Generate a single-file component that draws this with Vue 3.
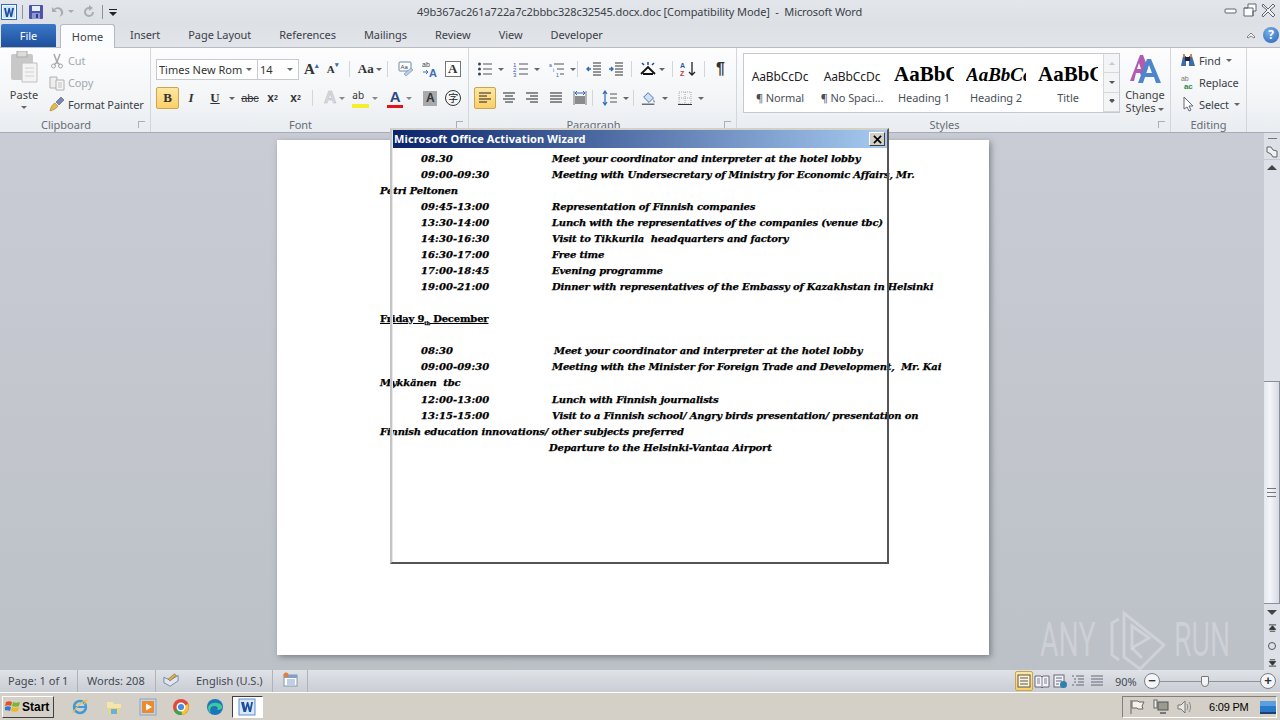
<template>
  <div class="window">
    <header class="titlebar">
      <div class="qat">
        <svg class="ic wordlogo" viewBox="0 0 16 16"><rect x=".5" y=".5" width="15" height="15" fill="#fff" stroke="#2a6cb8"/><rect x="2" y="2" width="12" height="12" fill="#cfe3f7"/><path d="M3 4h2l1 6 1.5-6h1.4L10 10l1-6h2l-2 9H9.400L8.200 8 7 13H5z" fill="#1c4f9c"/></svg>
        <span class="qsep"></span>
        <svg class="ic" viewBox="0 0 16 16"><rect x="1" y="1" width="14" height="14" rx="1" fill="#4a55a8"/><rect x="4" y="2" width="8" height="5" fill="#e8eefc"/><rect x="4" y="9" width="8" height="6" fill="#8d96d0"/><rect x="8" y="10" width="2" height="4" fill="#333c80"/></svg>
        <svg class="ic" viewBox="0 0 16 16"><path d="M3 3v5h5L6 6c2-2 6-1 6 3 0 2-1 3-2 4 3-1 5-3 4-6-1-4-6-5-9-2z" fill="#a9adb3"/></svg>
        <span class="tiny-caret q-caret"></span>
        <svg class="ic" viewBox="0 0 16 16"><path d="M8 3a5 5 0 1 0 5 5h-2a3 3 0 1 1-3-3v2l4-3-4-3z" fill="#a9adb3"/></svg>
        <span class="qsep"></span>
        <svg class="ic small-ic" viewBox="0 0 10 10"><path d="M1 2h8v1H1zM1 5h8L5 9z" fill="#222"/></svg>
      </div>
      <div class="doc-title">49b367ac261a722a7c2bbbc328c32545.docx.doc [Compatibility Mode]&nbsp; -&nbsp; Microsoft Word</div>
      <div class="winbtns">
        <svg class="ic" viewBox="0 0 16 16"><rect x="2" y="7" width="11" height="4" rx="1" fill="#fff" stroke="#5f6670"/></svg>
        <svg class="ic" viewBox="0 0 16 16"><path d="M6 2h8v7h-3v5H2V6h4z" fill="#fff" stroke="#5f6670"/><path d="M2 6h9v8" fill="none" stroke="#5f6670"/></svg>
        <svg class="ic" viewBox="0 0 16 16"><path d="M2 2l5 5 5-5 2 2-5 4 5 5-2 2-5-5-5 5-1-2 5-5-5-4z" fill="#eef0f3" stroke="#5f6670"/></svg>
      </div>
    </header>

    <nav class="tabs">
      <div class="tab-file">File</div>
      <div class="tab-home">Home</div>
      <div v-for="t in tabs" :key="t" class="tab">{{ t }}</div>
      <div class="tab-right">
        <svg class="ic small-ic" viewBox="0 0 10 10"><path d="M1 7l4-4 4 4-1 1-3-2-3 2z" fill="#fff" stroke="#555" stroke-width=".7"/></svg>
        <span class="help">?</span>
      </div>
    </nav>

    <section class="ribbon">
      <div class="group g-clip">
        <div class="g-body clip-body">
          <div class="paste">
            <svg class="paste-ic" viewBox="0 0 28 32"><rect x="1" y="3" width="22" height="26" rx="2" fill="#c8c8c8"/><rect x="7" y="0" width="10" height="6" fill="#dcdcdc" stroke="#aaa"/><path d="M12 12h15v19H12z" fill="#f3f3f3" stroke="#c0c0c0"/><path d="M15 17h9M15 21h9M15 25h9" stroke="#d0d0d0"/></svg>
            <span>Paste</span>
            <span class="tiny-caret"></span>
          </div>
          <div class="clip-list">
            <div class="clip-row dim"><svg class="ic" viewBox="0 0 16 16"><path d="M5 1l3 8 3-8M8 9l-3 3M8 9l3 3" fill="none" stroke="#a8a8a8" stroke-width="1.500"/><circle cx="4.500" cy="13" r="2" fill="none" stroke="#a8a8a8"/><circle cx="11.500" cy="13" r="2" fill="none" stroke="#a8a8a8"/></svg>Cut</div>
            <div class="clip-row dim"><svg class="ic" viewBox="0 0 16 16"><path d="M1 2h7v11H1z" fill="#eee" stroke="#b0b0b0"/><path d="M7 5h8v10H7z" fill="#f6f6f6" stroke="#b0b0b0"/><path d="M9 8h4M9 10h4M9 12h4" stroke="#c0c0c0"/></svg>Copy</div>
            <div class="clip-row"><svg class="ic" viewBox="0 0 16 16"><path d="M1 15c1-5 3-7 5-8l3 3c-1 2-4 4-8 5z" fill="#e5b84c" stroke="#8a6a20" stroke-width=".5"/><path d="M7 6l5-5 3 3-5 5z" fill="#7a86b8" stroke="#444" stroke-width=".5"/></svg>Format Painter</div>
          </div>
        </div>
        <div class="g-label">Clipboard<span class="launcher"></span></div>
      </div>

      <div class="group g-font">
        <div class="g-body rows">
          <div class="row">
            <div class="combo font-name"><span>Times New Roma</span><i class="tiny-caret"></i></div>
            <div class="combo font-size"><span>14</span><i class="tiny-caret"></i></div>
            <span class="grow-a big">A<sup>▴</sup></span>
            <span class="grow-a small">A<sup>▾</sup></span>
            <span class="vsep s1"></span>
            <span class="aa">Aa</span><i class="tiny-caret"></i>
            <span class="vsep s2"></span>
            <svg class="ic m1" viewBox="0 0 16 16"><rect x="1" y="1" width="12" height="9" rx="1" fill="#fff" stroke="#6a88b0"/><text x="2.500" y="8" font-size="6" font-family="Liberation Sans" fill="#345">Aa</text><path d="M8 15l7-6-2-2-7 6z" fill="#b9cde6" stroke="#5a78a8" stroke-width=".5"/></svg>
            <svg class="ic" viewBox="0 0 16 16"><text x="0" y="6" font-size="7" font-family="Liberation Sans" fill="#444">ab</text><path d="M1 11h5m-2-2l2 2-2 2" fill="none" stroke="#3a6fc0"/><text x="7" y="16" font-size="11" font-weight="700" font-family="Liberation Sans" fill="#3a6fc0">A</text></svg>
            <span class="boxed-a">A</span>
          </div>
          <div class="row">
            <span class="fbtn on b">B</span>
            <span class="fbtn i">I</span>
            <span class="fbtn u">U</span><i class="tiny-caret c-u"></i>
            <span class="fbtn abc">abc</span>
            <span class="fbtn xs">x<sub>2</sub></span>
            <span class="fbtn xs">x<sup>2</sup></span>
            <span class="vsep s3"></span>
            <span class="ghost-a">A</span><i class="tiny-caret c-g"></i>
            <span class="hl"><span>ab</span></span><i class="tiny-caret c-g"></i>
            <span class="color-a">A</span><i class="tiny-caret c-g"></i>
            <span class="shade-a">A</span>
            <span class="circled">字</span>
          </div>
        </div>
        <div class="g-label">Font<span class="launcher"></span></div>
      </div>

      <div class="group g-para">
        <div class="g-body rows">
          <div class="row">
            <svg class="ic" viewBox="0 0 16 16"><circle cx="2.500" cy="3" r="1.500" fill="#345"/><circle cx="2.500" cy="8" r="1.500" fill="#345"/><circle cx="2.500" cy="13" r="1.500" fill="#345"/><path d="M6 3h9M6 8h9M6 13h9" stroke="#555"/></svg><i class="tiny-caret gap-c"></i>
            <svg class="ic" viewBox="0 0 16 16"><text x="0" y="6" font-size="6" fill="#2a5ab0" font-family="Liberation Sans">1</text><text x="0" y="11" font-size="6" fill="#2a5ab0" font-family="Liberation Sans">2</text><text x="0" y="16" font-size="6" fill="#2a5ab0" font-family="Liberation Sans">3</text><path d="M6 3h9M6 8h9M6 13h9" stroke="#555"/></svg><i class="tiny-caret gap-c"></i>
            <svg class="ic" viewBox="0 0 16 16"><text x="0" y="6" font-size="5" fill="#2a5ab0" font-family="Liberation Sans">a</text><text x="4" y="11" font-size="5" fill="#2a5ab0" font-family="Liberation Sans">i</text><text x="7" y="16" font-size="5" fill="#2a5ab0" font-family="Liberation Sans">1</text><path d="M5 3h10M8 8h7M11 13h4" stroke="#555"/></svg><i class="tiny-caret gap-c"></i>
            <span class="vsep s4"></span>
            <svg class="ic" viewBox="0 0 16 16"><path d="M7 2h8M7 5h8M7 8h8M7 11h8M7 14h8" stroke="#333"/><path d="M5 8H1m2-2L1 8l2 2" fill="none" stroke="#2a6ac0" stroke-width="1.400"/></svg>
            <svg class="ic m3" viewBox="0 0 16 16"><path d="M7 2h8M7 5h8M7 8h8M7 11h8M7 14h8" stroke="#333"/><path d="M1 8h4M3 6l2 2-2 2" fill="none" stroke="#2a6ac0" stroke-width="1.400"/></svg>
            <span class="vsep s5"></span>
            <svg class="ic wide" viewBox="0 0 18 16"><path d="M2 13L9 6l7 7M4 13h10" fill="none" stroke="#111" stroke-width="1.800"/><path d="M3 2l2 2M9 1v3M15 2l-2 2" stroke="#1a4a9a" stroke-width="1.500"/></svg><i class="tiny-caret gap-d"></i>
            <span class="vsep s6"></span>
            <svg class="ic" viewBox="0 0 16 16"><text x="0" y="7" font-size="7" font-weight="700" fill="#2a5ab0" font-family="Liberation Sans">A</text><text x="0" y="15" font-size="7" font-weight="700" fill="#c03a3a" font-family="Liberation Sans">Z</text><path d="M12 1v13m-3-3l3 3 3-3" fill="none" stroke="#222" stroke-width="1.300"/></svg>
            <span class="vsep s7"></span>
            <span class="pilcrow">¶</span>
          </div>
          <div class="row">
            <span class="pbtn on"><svg class="ic" viewBox="0 0 16 16"><path d="M2 3h12M2 6h8M2 9h12M2 12h8" stroke="#222" stroke-width="1.200"/></svg></span>
            <span class="pbtn"><svg class="ic" viewBox="0 0 16 16"><path d="M2 3h12M4 6h8M2 9h12M4 12h8" stroke="#222" stroke-width="1.200"/></svg></span>
            <span class="pbtn"><svg class="ic" viewBox="0 0 16 16"><path d="M2 3h12M6 6h8M2 9h12M6 12h8" stroke="#222" stroke-width="1.200"/></svg></span>
            <span class="pbtn"><svg class="ic" viewBox="0 0 16 16"><path d="M2 3h12M2 6h12M2 9h12M2 12h12" stroke="#222" stroke-width="1.200"/></svg></span>
            <span class="pbtn"><svg class="ic" viewBox="0 0 16 16"><path d="M2 1v14M14 1v14" stroke="#777"/><path d="M3 3h10m-2-2l2 2-2 2M5 1L3 3l2 2" fill="none" stroke="#2a6ac0"/><path d="M3 7h10M3 9h10M3 11h10M3 13h10" stroke="#222"/></svg></span>
            <span class="vsep s8"></span>
            <svg class="ic" viewBox="0 0 16 16"><path d="M3 1v14M1 4l2-3 2 3M1 12l2 3 2-3" fill="none" stroke="#2a6ac0" stroke-width="1.200"/><path d="M8 4h7M8 8h7M8 12h7" stroke="#555"/></svg><i class="tiny-caret gap-c"></i>
            <span class="vsep s9"></span>
            <svg class="ic" viewBox="0 0 18 16"><path d="M8 2l6 6-5 5-6-6z" fill="#cfe0f2" stroke="#3a6aa5"/><path d="M14 9c1 2 2 3 1 4-1 0-1-2-1-4z" fill="#3a6aa5"/><path d="M1 15h14" stroke="#555" stroke-width="1.400"/></svg><i class="tiny-caret gap-c"></i>
            <svg class="ic" viewBox="0 0 16 16"><path d="M2 2h12v12H2zM8 2v12M2 8h12" fill="none" stroke="#aaa" stroke-dasharray="1 1"/><path d="M1 14.500h14" stroke="#333"/></svg><i class="tiny-caret gap-c"></i>
          </div>
        </div>
        <div class="g-label">Paragraph<span class="launcher"></span></div>
      </div>

      <div class="group g-styles">
        <div class="g-body styles-body">
          <div class="gallery">
            <div v-for="s in styles" :key="s.label" class="style-item">
              <div class="preview" :class="s.cls">{{ s.preview }}</div>
              <div class="style-label">{{ s.label }}</div>
            </div>
            <div class="gal-scroll">
              <span class="gal-b"><i class="up"></i></span>
              <span class="gal-b"><i class="down"></i></span>
              <span class="gal-b"><i class="more"></i></span>
            </div>
          </div>
          <div class="change-styles">
            <svg class="cs-ic" viewBox="0 0 36 32"><path d="M3 28L13 2h3l5 13-5 13-3-8H9l-2 8zM10 16h4l-2-6z" fill="#b05cb0"/><path d="M11 30L20 6h4l10 24h-5l-2-6h-9l-2 6zM19 20h6l-3-8z" fill="#4d86cc"/></svg>
            <div>Change</div>
            <div>Styles <i class="tiny-caret inl"></i></div>
          </div>
        </div>
        <div class="g-label">Styles<span class="launcher"></span></div>
      </div>

      <div class="group g-edit">
        <div class="g-body edit-list">
          <div class="clip-row"><svg class="ic" viewBox="0 0 16 16"><path d="M1 14l2-10h3v10zM9 14V4h3l3 10z" fill="#3f6aa8"/><rect x="5" y="5" width="5" height="4" fill="#223"/><path d="M3 2h2v3H3zM10 2h2v3h-2z" fill="#d08a3a"/></svg>Find <i class="tiny-caret inl ml"></i></div>
          <div class="clip-row"><svg class="ic" viewBox="0 0 16 16"><text x="1" y="7" font-size="7" fill="#777" font-family="Liberation Sans">ab</text><text x="4" y="15" font-size="8" font-weight="700" fill="#2f8a4a" font-family="Liberation Sans">ac</text></svg>Replace</div>
          <div class="clip-row"><svg class="ic" viewBox="0 0 16 16"><path d="M4 1v12l3-2 2 4 2-1-2-4h4z" fill="#fff" stroke="#667"/></svg>Select <i class="tiny-caret inl ml"></i></div>
        </div>
        <div class="g-label no-launch">Editing</div>
      </div>
    </section>

    <main class="doc-area">
      <div class="doc-scroll">
        <article class="page">
          <div v-for="(l, i) in lines" :key="i" class="line" :class="l.cls">
            <template v-if="l.time !== undefined">
              <span class="time">{{ l.time }}</span><span class="what" :class="l.what2">{{ l.text }}</span>
            </template>
            <template v-else-if="l.head"><u class="day-head">Friday 9<sub class="th">th</sub> December</u></template>
            <template v-else>{{ l.text }}</template>
          </div>
        </article>
      </div>
      <aside class="vscroll">
        <div class="ruler-btn"><span class="ruler-dash"></span><svg viewBox="0 0 12 12"><path d="M1 1l4 0 2 3 4 1v6H7L5 8 1 6z" fill="#eef0f4" stroke="#555" stroke-width=".9"/></svg></div>
        <div class="sb-up"></div>
        <div class="track-space"></div>
        <div class="thumb"><span class="grip"></span></div>
        <div class="sb-down"></div>
        <div class="nav-b"><svg viewBox="0 0 10 10"><path d="M1 1h8M5 2L1.500 6h7zM2 8h6" stroke="#333" fill="#333"/></svg></div>
        <div class="nav-b"><span class="dot"></span></div>
        <div class="nav-b"><svg viewBox="0 0 10 10"><path d="M2 2h6M5 8L1.500 4h7zM1 9h8" stroke="#333" fill="#333"/></svg></div>
      </aside>
    </main>

    <footer class="statusbar">
      <span class="st st-page">Page: 1 of 1</span>
      <span class="st st-words">Words: 208</span>
      <span class="st st-book"><svg class="ic" viewBox="0 0 18 16"><path d="M1 5l7 3 9-5v6l-9 6-7-4z" fill="#dfe6f0" stroke="#56688a" stroke-width=".8"/><path d="M6 7l7-6 2 2-7 6z" fill="#d9b04a" stroke="#7a5a20" stroke-width=".6"/></svg></span>
      <span class="st st-lang">English (U.S.)</span>
      <span class="st st-macro"><svg class="ic" viewBox="0 0 16 16"><rect x="2" y="3" width="13" height="11" fill="#fff" stroke="#8a96a8"/><rect x="2" y="3" width="13" height="3" fill="#7f9fd0"/><path d="M5 8h8M5 10h8M5 12h8" stroke="#7f9fd0"/><circle cx="4" cy="3" r="2.500" fill="#e0803a"/></svg></span>
      <span class="st-fill"></span>
      <span class="view-btn on"><svg class="ic" viewBox="0 0 16 16"><rect x="2" y="2" width="12" height="12" fill="#fff6d8" stroke="#555"/><path d="M4 5h8M4 8h8M4 11h8" stroke="#555"/></svg></span>
      <span class="view-btn"><svg class="ic" viewBox="0 0 16 16"><path d="M1 3h6l1 1 1-1h6v11H9l-1 1-1-1H1z" fill="#f2f4f7" stroke="#667"/><path d="M8 4v10M3 6h3M3 8h3M3 10h3M10 6h3M10 8h3M10 10h3" stroke="#667" stroke-width=".8"/></svg></span>
      <span class="view-btn"><svg class="ic" viewBox="0 0 16 16"><rect x="2" y="2" width="10" height="12" fill="#f2f4f7" stroke="#667"/><path d="M4 5h6M4 8h6M4 11h3" stroke="#667"/><circle cx="11.500" cy="11.500" r="3.500" fill="#2f7fb0"/></svg></span>
      <span class="view-btn"><svg class="ic" viewBox="0 0 16 16"><path d="M2 3h2M6 3h8M4 6h2M8 6h6M4 9h2M8 9h6M2 12h2M6 12h8" stroke="#667"/></svg></span>
      <span class="view-btn"><svg class="ic" viewBox="0 0 16 16"><path d="M2 3h12M2 6h12M2 9h12M2 12h12" stroke="#667"/></svg></span>
      <span class="zoom-val">90%</span>
      <span class="zbtn">−</span>
      <span class="zline"><span class="zthumb"></span></span>
      <span class="zbtn">+</span>
    </footer>

    <div class="taskbar">
      <button class="start">
        <svg class="flag" viewBox="0 0 16 16"><path d="M1 3c2-1 4-1 6 0L6 7C4 6 2 6 0 7z" fill="#e2512a"/><path d="M8 3c2 1 4 1 7 0l-1 4c-2 1-5 1-7 0z" fill="#79b82e"/><path d="M0 8c2-1 4-1 6 0l-1 4c-2-1-4-1-6 0z" fill="#2f7ad0"/><path d="M7 8c2 1 5 1 7 0l-1 4c-2 1-5 1-7 0z" fill="#f0b81e"/></svg>Start
      </button>
      <div class="task-ic first"><svg viewBox="0 0 18 18"><circle cx="9" cy="9" r="6" fill="none" stroke="#3f9ad8" stroke-width="2.500"/><path d="M4 9h10" stroke="#3f9ad8" stroke-width="2"/><path d="M2 15c3-6 9-12 14-13-1 2-2 3-3 4" fill="none" stroke="#e8c04a" stroke-width="1.200"/></svg></div>
      <div class="task-ic"><svg viewBox="0 0 18 18"><path d="M3 6h12v10H3z" fill="#e8d48a"/><path d="M2 4h6l1 2h7v4H2z" fill="#f5e5a8"/><path d="M6 16v-5h6v5" fill="#6ab0d8"/></svg></div>
      <div class="task-ic"><svg viewBox="0 0 18 18"><rect x="1" y="1" width="16" height="16" fill="#bcd4ec" stroke="#8aa4c4"/><rect x="3" y="3" width="12" height="12" fill="#f08a28"/><path d="M7 5.500l6 3.500-6 3.500z" fill="#fff"/></svg></div>
      <div class="task-ic"><svg viewBox="0 0 18 18"><circle cx="9" cy="9" r="8" fill="#e04a3a"/><path d="M9 9L2 13a8 8 0 0 0 8 4z" fill="#3aa655"/><path d="M9 9l7-3a8 8 0 0 1-6 11z" fill="#f5c42e"/><circle cx="9" cy="9" r="3.800" fill="#4a8de0" stroke="#fff" stroke-width="1.400"/></svg></div>
      <div class="task-ic"><svg viewBox="0 0 18 18"><circle cx="9" cy="9" r="8" fill="#1a76b8"/><path d="M2 9c2-5 11-6 14-1 1 3-2 4-5 4 2-2 0-4-3-4-3 0-5 3-3 7-2-1-3-3-3-6z" fill="#3fc8a0"/></svg></div>
      <div class="task-word"><svg viewBox="0 0 18 18"><rect x="1" y="1" width="16" height="16" fill="#d8e8f8" stroke="#5f8fc8"/><path d="M3 4h3l1.200 6L9 4h1.200L12 10l1.200-6H15l-2 10h-2L9.500 8 8 14H5.500z" fill="#1c4f9c"/></svg></div>
      <div class="task-fill"></div>
      <div class="tray">
        <svg class="tray-ic" viewBox="0 0 16 16"><path d="M2 1v14" stroke="#666"/><path d="M3 2h6l1 1h5l-2 4 1 3H9L8 9H3z" fill="#f4f2ea" stroke="#666"/></svg>
        <svg class="tray-ic" viewBox="0 0 16 16"><rect x="1" y="1" width="3" height="8" fill="#eee" stroke="#666"/><rect x="5" y="3" width="10" height="8" fill="#9a9a90" stroke="#555"/><path d="M7 13h6v2H7z" fill="#777"/></svg>
        <svg class="tray-ic" viewBox="0 0 16 16"><path d="M1 6h3l4-4v12l-4-4H1z" fill="#e8e8e0" stroke="#777"/><path d="M10 5c1 2 1 4 0 6M12 3c2 3 2 7 0 10" fill="none" stroke="#888"/></svg>
        <span class="clock">6:09 PM</span>
        <svg class="tray-ic mon" viewBox="0 0 16 16"><rect x="0" y="2" width="16" height="12" fill="#2a78c8"/><rect x="0" y="2" width="16" height="5" fill="#5aa0e0"/><rect x="0" y="13" width="16" height="2" fill="#1c3f70"/></svg>
      </div>
    </div>

    <div class="activation">
      <div class="act-title">
        <span class="act-text">Microsoft Office Activation Wizard</span>
        <span class="act-close"><svg viewBox="0 0 10 10"><path d="M1 1l8 8M9 1l-8 8" stroke="#000" stroke-width="1.800"/></svg></span>
      </div>
    </div>

    <div class="watermark">
      <span class="wm-text">ANY</span>
      <svg class="wm-logo" viewBox="0 0 56 62"><g fill="none" stroke="#fff" stroke-opacity=".28" stroke-width="3"><path d="M9 10L2 14v32l7 5"/><path d="M14 4v44l16 12 24-24L14 4z"/><path d="M22 17v22l17-10-17-12z"/><path d="M22 39l10 10"/></g></svg>
      <span class="wm-text">RUN</span>
    </div>
  </div>
</template>

<script setup>
const tabs = ['Insert', 'Page Layout', 'References', 'Mailings', 'Review', 'View', 'Developer']

const styles = [
  { label: '¶ Normal', preview: 'AaBbCcDc', cls: 'p-normal' },
  { label: '¶ No Spaci...', preview: 'AaBbCcDc', cls: 'p-normal' },
  { label: 'Heading 1', preview: 'AaBbC', cls: 'p-h1' },
  { label: 'Heading 2', preview: 'AaBbCc', cls: 'p-h2' },
  { label: 'Title', preview: 'AaBbC', cls: 'p-h1' }
]

const lines = [
  { time: '08.30', text: 'Meet your coordinator and interpreter at the hotel lobby' },
  { time: '09:00-09:30', text: 'Meeting with Undersecretary of Ministry for Economic Affairs, Mr.' },
  { text: 'Petri Peltonen' },
  { time: '09:45-13:00', text: 'Representation of Finnish companies' },
  { time: '13:30-14:00', text: 'Lunch with the representatives of the companies (venue tbc)' },
  { time: '14:30-16:30', text: 'Visit to Tikkurila  headquarters and factory' },
  { time: '16:30-17:00', text: 'Free time' },
  { time: '17:00-18:45', text: 'Evening programme' },
  { time: '19:00-21:00', text: 'Dinner with representatives of the Embassy of Kazakhstan in Helsinki' },
  { text: '\u00a0' },
  { head: true },
  { text: '\u00a0' },
  { time: '08:30', text: 'Meet your coordinator and interpreter at the hotel lobby', what2: 'nudge' },
  { time: '09:00-09:30', text: 'Meeting with the Minister for Foreign Trade and Development,  Mr. Kai' },
  { text: 'Mykkänen  tbc' },
  { time: '12:00-13:00', text: 'Lunch with Finnish journalists', cls: 'jump' },
  { time: '13:15-15:00', text: 'Visit to a Finnish school/ Angry birds presentation/ presentation on' },
  { text: 'Finnish education innovations/ other subjects preferred' },
  { time: '', text: 'Departure to the Helsinki-Vantaa Airport', what2: 'back' }
]
</script>

<style>
html, body { margin: 0; overflow: hidden; }
</style>

<style scoped>
.window {
  position: relative;
  width: 1280px;
  height: 720px;
  overflow: hidden;
  display: flex;
  flex-direction: column;
  font-family: "Noto Sans", sans-serif;
  font-size: 11px;
  color: #3c4048;
  background: #d9dde3;
}
.ic { width: 16px; height: 16px; flex: none; display: block; }
.small-ic { width: 10px; height: 10px; }
.tiny-caret {
  display: inline-block;
  width: 0;
  height: 0;
  flex: none;
  border-left: 3px solid transparent;
  border-right: 3px solid transparent;
  border-top: 3px solid #666;
}

.titlebar {
  height: 22px;
  flex: none;
  display: flex;
  align-items: center;
  background: linear-gradient(#e3e6ea, #dde1e6);
  position: relative;
}
.qat { display: flex; align-items: center; gap: 5px; padding: 1px 0 0 1px; }
.wordlogo { width: 16px; height: 16px; }
.qsep { width: 1px; height: 14px; background: #8d939c; }
.q-caret { margin: 0 2px 0 -2px; border-top-color: #aaa; }
.doc-title {
  position: absolute;
  left: 417px;
  top: 4px;
  white-space: nowrap;
  color: #3b3f46;
  font-size: 11px;
  letter-spacing: -.1px;
}
.winbtns { margin: -3px 0 0 auto; display: flex; gap: 3px; padding-right: 3px; }

.tabs {
  height: 25px;
  flex: none;
  display: flex;
  align-items: flex-end;
  background: linear-gradient(#dde1e6, #e1e4e8);
  position: relative;
}
.tab-file {
  width: 55px;
  height: 23px;
  margin: 0 4px 0 1px;
  display: flex;
  align-items: center;
  justify-content: center;
  color: #fff;
  background: linear-gradient(#3a78c8, #1d4f9c);
  border-radius: 2px 2px 0 0;
}
.tab-home {
  width: 55px;
  height: 24px;
  box-sizing: border-box;
  margin-bottom: -1px;
  display: flex;
  align-items: center;
  justify-content: center;
  background: #fbfcfd;
  border: 1px solid #b6bac0;
  border-bottom: none;
  border-radius: 3px 3px 0 0;
  margin-right: 1px;
  z-index: 1;
}
.tab { height: 24px; line-height: 24px; padding: 0 14px; white-space: nowrap; letter-spacing: -.05px; }
.tab-right { margin-left: auto; display: flex; align-items: center; gap: 7px; height: 24px; padding-right: 1px; }
.help {
  width: 16px;
  height: 16px;
  border-radius: 50%;
  background: radial-gradient(circle at 40% 30%, #7cb0e8, #1f63b8);
  color: #fff;
  font-weight: 700;
  font-size: 12px;
  line-height: 16px;
  text-align: center;
}

.ribbon {
  height: 86px;
  flex: none;
  display: flex;
  box-sizing: border-box;
  border-top: 1px solid #b8bcc2;
  border-bottom: 1px solid #a9adb3;
  background: linear-gradient(#fdfdfe, #f3f5f7 60%, #e9ecf0);
}
.group {
  display: flex;
  flex-direction: column;
  box-sizing: border-box;
  border-right: 1px solid #d3d7dc;
  position: relative;
}
.g-body { flex: 1; min-height: 0; }
.g-label {
  height: 17px;
  line-height: 19px;
  padding-right: 18px;
  text-align: center;
  color: #666c75;
  flex: none;
  position: relative;
}
.g-label.no-launch { padding-right: 0; }
.launcher {
  position: absolute;
  right: 5px;
  top: 6px;
  width: 7px;
  height: 7px;
  border: 1px solid #aab0b8;
  border-width: 1px 0 0 1px;
  box-sizing: border-box;
}
.g-clip { width: 151px; }
.g-font { width: 318px; }
.g-para { width: 268px; }
.g-styles { width: 434px; }
.g-edit { width: 76px; }

.clip-body { display: flex; padding: 2px 0 0 5px; }
.paste { width: 38px; display: flex; flex-direction: column; align-items: center; color: #444; }
.paste-ic { width: 28px; height: 32px; margin: 1px 0 4px; }
.paste .tiny-caret { margin-top: 4px; }
.clip-list { margin-left: 6px; display: flex; flex-direction: column; }
.clip-row { height: 22px; display: flex; align-items: center; gap: 3px; white-space: nowrap; letter-spacing: -.12px; }
.dim { color: #a6a9ae; }

.rows { display: flex; flex-direction: column; gap: 7px; padding: 10px 0 0 5px; }
.row { height: 22px; display: flex; align-items: center; }
.combo {
  height: 21px;
  box-sizing: border-box;
  background: #fff;
  border: 1px solid #c6cad0;
  display: flex;
  align-items: center;
  padding-left: 2px;
  color: #333;
  overflow: hidden;
  white-space: nowrap;
}
.combo span { flex: 1; overflow: hidden; }
.combo i { margin: 0 5px 0 4px; }
.font-name { width: 102px; }
.font-size { width: 42px; margin-left: -1px; }
.grow-a {
  font-family: "Liberation Serif", serif;
  font-weight: 700;
  color: #333;
  white-space: nowrap;
}
.grow-a sup { font-size: 7px; font-family: "Liberation Sans", sans-serif; vertical-align: 6px; line-height: 0; color: #3a6ea8; }
.grow-a.big { font-size: 15px; margin-left: 5px; }
.grow-a.small { font-size: 11px; margin-left: 8px; }
.vsep { width: 1px; height: 16px; background: #d2d6dc; flex: none; }
.s1 { margin: 0 8px 0 10px; }
.aa { font: 700 13px "Liberation Serif", serif; color: #333; margin-right: 2px; }
.s2 { margin: 0 10px 0 5px; }
.m1 { margin-right: 8px; }
.boxed-a {
  width: 16px;
  height: 16px;
  box-sizing: border-box;
  border: 1px solid #777;
  font: 700 13px/14px "Liberation Serif", serif;
  text-align: center;
  color: #333;
  background: #fff;
  margin-left: 7px;
}
.fbtn {
  height: 22px;
  display: flex;
  align-items: center;
  justify-content: center;
  color: #333;
  width: 24px;
  box-sizing: border-box;
  font: 700 13px "Liberation Serif", serif;
}
.fbtn.b { width: 23px; }
.fbtn.on, .pbtn.on, .view-btn.on {
  background: linear-gradient(#fde7a2, #fbcf68);
  border: 1px solid #c9a550;
  border-radius: 2px;
}
.fbtn.i { font-style: italic; }
.fbtn.u { text-decoration: underline; }
.c-u { margin-left: 2px; margin-right: 4px; }
.abc { font: 11px "Liberation Sans", sans-serif; text-decoration: line-through; width: 22px; }
.xs { font: 700 12px "Liberation Sans", sans-serif; width: 23px; }
.xs sub, .xs sup { font-size: 7px; line-height: 0; }
.s3 { margin: 0 11px 0 5px; }
.ghost-a { font: 700 17px "Liberation Sans", sans-serif; color: #d8dadd; -webkit-text-stroke: .5px #b8bbc0; }
.c-g { margin: 0 7px 0 3px; border-top-color: #888; }
.hl {
  width: 17px;
  height: 19px;
  font-size: 10px;
  line-height: 13px;
  color: #333;
  box-sizing: border-box;
  border-bottom: 4px solid #f5ee2a;
}
.color-a { font: 700 15px/16px "Liberation Sans", sans-serif; width: 16px; margin-left: 2px; text-align: center; color: #2c4a80; border-bottom: 3px solid #e8101a; }
.shade-a {
  width: 14px;
  height: 15px;
  margin-left: 4px;
  background: #a8aaad;
  font: 700 12px/15px "Liberation Sans", sans-serif;
  text-align: center;
  color: #333;
}
.circled {
  width: 16px;
  height: 16px;
  box-sizing: border-box;
  border: 1px solid #333;
  border-radius: 50%;
  margin-left: 8px;
  font: 10px/14px "Noto Sans CJK SC", sans-serif;
  text-align: center;
  color: #222;
}

.g-para .rows { padding-left: 8px; }
.gap-c { margin: 0 9px 0 5px; }
.gap-d { margin: 0 5px 0 2px; }
.s4 { margin: 0 8px 0 -8px; }
.m3 { margin-left: 6px; }
.s5 { margin: 0 7px 0 7px; }
.wide { width: 18px; }
.s6 { margin: 0 7px 0 2px; }
.s7 { margin: 0 11px 0 8px; }
.pilcrow { font: 700 16px "Liberation Sans", sans-serif; color: #333; }
.pbtn { width: 22px; height: 22px; display: flex; align-items: center; justify-content: center; box-sizing: border-box; margin-right: 1.7px; }
.g-para .row:last-child { margin-left: -3px; }
.s8 { margin: 0 9px 0 0; }
.s9 { margin: 0 7px 0 -5px; }

.styles-body { display: flex; padding: 5px 0 0 6px; }
.gallery {
  width: 377px;
  height: 60px;
  box-sizing: border-box;
  background: #fff;
  border: 1px solid #c6cad0;
  display: flex;
  position: relative;
}
.style-item { width: 72px; flex: none; text-align: center; overflow: hidden; }
.preview {
  height: 33px;
  margin: 0 6px;
  display: flex;
  align-items: flex-end;
  justify-content: center;
  overflow: hidden;
  white-space: nowrap;
  color: #222;
}
.p-normal { font: 12px/20px "Noto Sans", sans-serif; letter-spacing: -.1px; }
.p-h1 { font: 700 21px/25px "Liberation Serif", serif; color: #000; justify-content: flex-start; }
.p-h2 { font: italic 700 19px/25px "Liberation Serif", serif; color: #000; justify-content: flex-start; }
.style-label { margin-top: 3px; color: #4a4f57; white-space: nowrap; letter-spacing: -.1px; }
.gal-scroll {
  position: absolute;
  right: 0;
  top: 0;
  bottom: 0;
  width: 15px;
  display: flex;
  flex-direction: column;
  border-left: 1px solid #d5d9de;
  background: #f2f4f6;
}
.gal-b { flex: 1; display: flex; align-items: center; justify-content: center; border-bottom: 1px solid #d5d9de; box-sizing: border-box; }
.gal-b i { width: 0; height: 0; border-left: 3px solid transparent; border-right: 3px solid transparent; }
.gal-b .up { border-bottom: 3px solid #c8c8c8; }
.gal-b .down { border-top: 3px solid #555; }
.gal-b .more { border-top: 3px solid #555; box-shadow: 0 -2px 0 -1px #555; }
.change-styles { width: 50px; text-align: center; line-height: 13px; color: #444; }
.cs-ic { width: 36px; height: 32px; display: block; margin: 0 auto 3px; }
.inl { vertical-align: middle; }
.ml { margin-left: 2px; }
.edit-list { padding: 1px 0 0 9px; }

.doc-area {
  flex: 1;
  min-height: 0;
  display: flex;
  background: linear-gradient(#c9ccd4, #bcc0c7);
}
.doc-scroll { flex: 1; min-width: 0; padding: 7px 0 0 277px; box-sizing: border-box; }
.page {
  width: 712px;
  height: 515px;
  box-sizing: border-box;
  background: #fff;
  padding: 11px 0 0 103px;
  box-shadow: 2px 2px 6px rgba(70, 74, 84, .55);
  color: #000;
  font: italic 700 10px/16px "DejaVu Serif", serif;
  letter-spacing: -.18px;
  -webkit-text-stroke: .25px #000;
}
.line { height: 16px; display: flex; white-space: pre; }
.jump { margin-top: 1px; }
.time { width: 131px; margin-left: 41px; flex: none; letter-spacing: .1px; }
.nudge { margin-left: 2px; }
.back { margin-left: -3px; }
.day-head { font-style: normal; }
.th { font-size: 5px; line-height: 0; }

.vscroll {
  width: 16px;
  flex: none;
  display: flex;
  flex-direction: column;
  background: #dde0e6;
}
.ruler-btn { height: 27px; flex: none; padding: 5px 2px 0; box-sizing: border-box; border-bottom: 1px solid #c4c8cf; }
.ruler-dash { display: block; width: 9px; height: 1px; margin: 0 auto 7px; background: #777; }
.ruler-btn svg { width: 12px; height: 12px; display: block; }
.sb-up { height: 21px; position: relative; flex: none; }
.sb-up::after, .sb-down::after {
  content: "";
  position: absolute;
  left: 3px;
  top: 5px;
  border-left: 5px solid transparent;
  border-right: 5px solid transparent;
}
.sb-up::after { border-bottom: 5px solid #444; }
.track-space { height: 200px; flex: none; }
.thumb {
  height: 223px;
  flex: none;
  box-sizing: border-box;
  border: 1px solid #8a8f98;
  border-width: 1px 1px 1px 0;
  background: linear-gradient(90deg, #e4e8f0, #f3f5fa 40%, #d5d9e2);
  display: flex;
  align-items: center;
  justify-content: center;
}
.grip { width: 9px; height: 7px; border-top: 1px solid #777; border-bottom: 1px solid #777; background: linear-gradient(#0000 3px, #777 3px, #777 4px, #0000 4px); }
.sb-down { height: 16px; position: relative; flex: none; }
.sb-down::after { border-top: 5px solid #444; top: 6px; }
.nav-b { height: 17px; flex: none; display: flex; align-items: center; justify-content: center; }
.nav-b svg { width: 9px; height: 9px; }
.dot { width: 6px; height: 6px; border: 1px solid #555; border-radius: 50%; }

.statusbar {
  height: 23px;
  flex: none;
  display: flex;
  align-items: center;
  box-sizing: border-box;
  background: linear-gradient(#dfe2e7, #c9cdd4);
  border-bottom: 1px solid #fff;
  color: #454a52;
}
.st { height: 100%; padding-bottom: 2px; display: flex; align-items: center; box-sizing: border-box; border-right: 1px solid #aeb2b9; white-space: nowrap; }
.st-page { width: 78px; padding-left: 8px; }
.st-words { width: 78px; padding-left: 9px; }
.st-book { width: 28px; padding-left: 7px; border-right: none; }
.st-lang { width: 89px; padding-left: 12px; }
.st-macro { width: 35px; padding-left: 9px; }
.st-fill { flex: 1; height: 100%; }
.view-btn { width: 18px; height: 20px; display: flex; align-items: center; justify-content: center; box-sizing: border-box; margin-right: .3px; }
.view-btn.on { margin-right: 0; }
.zoom-val { margin: 0 7px 0 9px; width: 22px; white-space: nowrap; }
.zbtn {
  width: 16px;
  height: 16px;
  box-sizing: border-box;
  border-radius: 50%;
  border: 1px solid #7a7f88;
  background: #f4f5f7;
  font: 700 13px/13px "Liberation Sans", sans-serif;
  text-align: center;
  color: #333;
}
.zline { width: 100px; height: 1px; background: #8f949c; position: relative; }
.zthumb {
  position: absolute;
  left: 41px;
  top: -5px;
  width: 8px;
  height: 11px;
  background: #f3f4f6;
  border: 1px solid #777;
  border-radius: 1px 1px 4px 4px;
  box-sizing: border-box;
}
.statusbar > .zbtn:last-child { margin-right: 4px; }

.taskbar {
  height: 27px;
  flex: none;
  display: flex;
  align-items: center;
  background: #d4d0c8;
}
.start {
  width: 52px;
  height: 22px;
  margin-left: 2px;
  padding: 0 0 0 2px;
  display: flex;
  align-items: center;
  gap: 1px;
  background: #d4d0c8;
  border: 1px solid;
  border-color: #fff #404040 #404040 #fff;
  font: 700 12px "Liberation Sans", sans-serif;
  color: #000;
}
.flag { width: 16px; height: 16px; }
.task-ic { width: 18px; height: 18px; margin-right: 15.8px; flex: none; }
.task-ic.first { margin-left: 17px; }
.task-ic svg, .task-word svg { width: 18px; height: 18px; display: block; }
.task-word {
  width: 31px;
  height: 22px;
  margin-left: -8px;
  box-sizing: border-box;
  background: #fff;
  border: 1px solid;
  border-color: #404040 #fff #fff #404040;
  display: flex;
  align-items: center;
  justify-content: center;
}
.task-fill { flex: 1; }
.tray {
  width: 155px;
  height: 22px;
  margin-right: 3px;
  box-sizing: border-box;
  border: 1px solid;
  border-color: #808080 #fff #fff #808080;
  display: flex;
  align-items: center;
  padding-left: 6px;
  gap: 8px;
  font: 11px "Liberation Sans", sans-serif;
  letter-spacing: -.2px;
  color: #000;
}
.tray-ic { width: 16px; height: 16px; flex: none; }
.clock { margin-left: 8px; width: 52px; white-space: nowrap; }
.mon { margin-left: 1px; }

.activation {
  position: absolute;
  left: 390px;
  top: 128px;
  width: 499px;
  height: 436px;
  box-sizing: border-box;
  border: 2px solid;
  border-color: #d4d0c8 #555 #555 #c4c4c4;
  box-shadow: inset 1px 0 0 #e8e8e8;
}
.act-title {
  height: 18px;
  margin-left: 1px;
  display: flex;
  align-items: center;
  justify-content: space-between;
  padding-left: 1px;
  background: linear-gradient(90deg, #0a246a, #a6caf0);
  color: #fff;
  font: 700 11px "Noto Sans", sans-serif;
  letter-spacing: .12px;
}
.act-text { margin-top: -2px; }
.act-close {
  width: 16px;
  height: 14px;
  margin-right: 2px;
  box-sizing: border-box;
  background: #d4d0c8;
  border: 1px solid;
  border-color: #fff #404040 #404040 #fff;
  display: flex;
  align-items: center;
  justify-content: center;
}
.act-close svg { width: 9px; height: 9px; }

.watermark {
  position: absolute;
  left: 1040px;
  top: 609px;
  display: flex;
  align-items: center;
  pointer-events: none;
}
.wm-text {
  width: 62px;
  font: 400 49px/62px "Roboto", sans-serif;
  color: rgba(255, 255, 255, .26);
  transform: scaleX(.58);
  transform-origin: left center;
  white-space: nowrap;
}
.wm-logo { width: 56px; height: 62px; margin: 0 8px 0 8px; }
</style>
